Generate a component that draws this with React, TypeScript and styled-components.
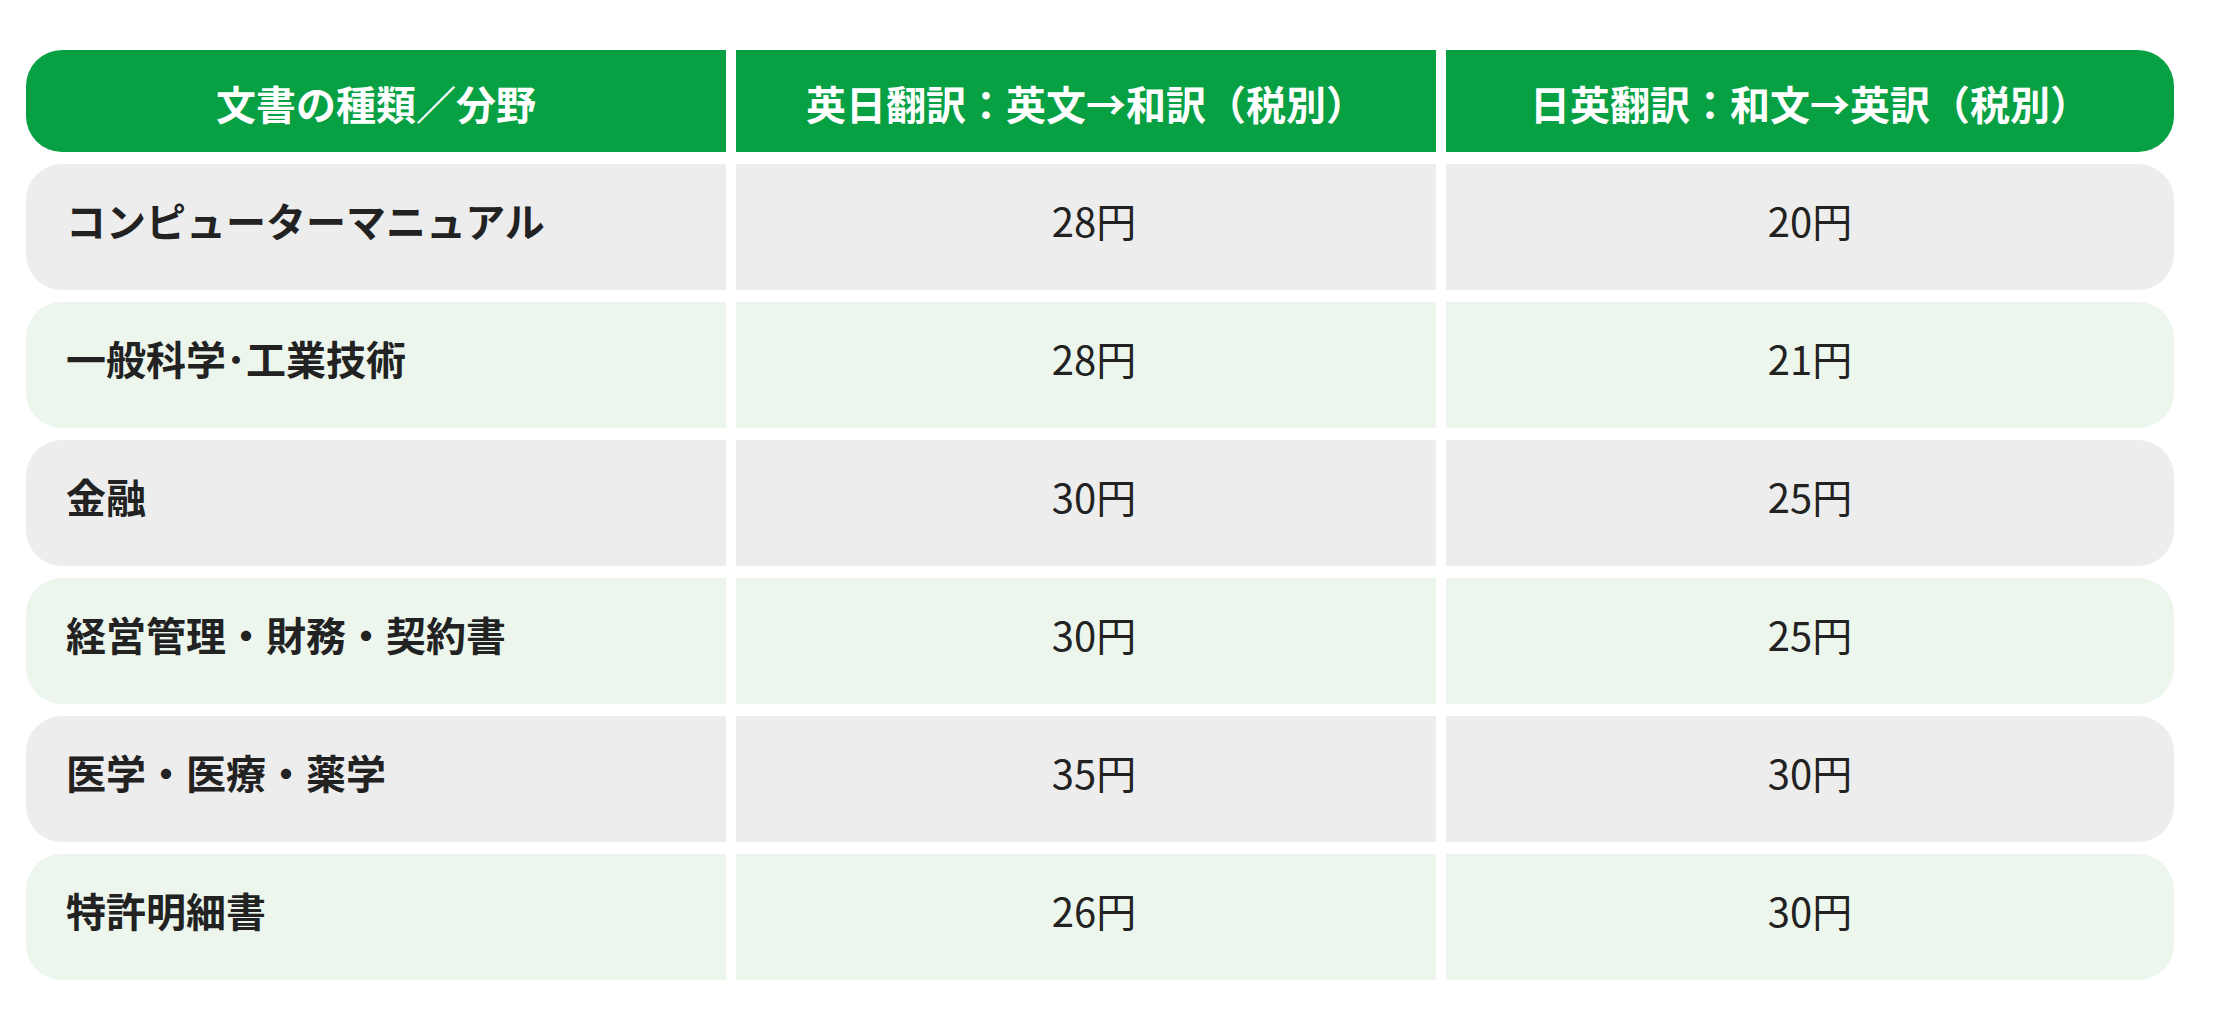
import React from 'react';
import styled, {createGlobalStyle} from 'styled-components';

const GlobalStyle = createGlobalStyle`
    * {
        box-sizing: border-box;
    }
    body {
        margin: 0;
        background: #ffffff;
        font-family: "Noto Sans CJK JP", "Noto Sans", sans-serif;
        color: #222222;
    }
`;

type RowData = {field: string, enJa: string, jaEn: string};

const rows: RowData[] = [
    {field: 'コンピューターマニュアル', enJa: '28円', jaEn: '20円'},
    {field: '一般科学･工業技術', enJa: '28円', jaEn: '21円'},
    {field: '金融', enJa: '30円', jaEn: '25円'},
    {field: '経営管理・財務・契約書', enJa: '30円', jaEn: '25円'},
    {field: '医学・医療・薬学', enJa: '35円', jaEn: '30円'},
    {field: '特許明細書', enJa: '26円', jaEn: '30円'},
];

const App: React.FunctionComponent = () => {
    return (
        <>
            <GlobalStyle/>
            <Page>
                <PriceTable>
                    <HeadCell>文書の種類／分野</HeadCell>
                    <HeadCell>英日翻訳：英文→和訳（税別）</HeadCell>
                    <HeadCell>日英翻訳：和文→英訳（税別）</HeadCell>
                    {rows.map((row, index) => (
                        <React.Fragment key={row.field}>
                            <FieldCell $tint={index % 2 === 1}>{row.field}</FieldCell>
                            <PriceCell $tint={index % 2 === 1} $shift={16}>{row.enJa}</PriceCell>
                            <PriceCell $tint={index % 2 === 1} $shift={0}>{row.jaEn}</PriceCell>
                        </React.Fragment>
                    ))}
                </PriceTable>
            </Page>
        </>
    );
}

const Page = styled.div`
    width: 2240px;
    min-height: 1026px;
    padding: 50px 66px 0 26px;
`;

const PriceTable = styled.div`
    display: grid;
    grid-template-columns: 700fr 700fr 728fr;
    grid-auto-rows: 126px;
    grid-template-rows: 102px;
    column-gap: 10px;
    row-gap: 12px;
    font-size: 40px;
    line-height: normal;

    & > :nth-child(3n + 1) {
        border-top-left-radius: 36px;
        border-bottom-left-radius: 36px;
    }
    & > :nth-child(3n) {
        border-top-right-radius: 36px;
        border-bottom-right-radius: 36px;
    }
`;

const HeadCell = styled.div`
    display: flex;
    align-items: center;
    justify-content: center;
    padding-top: 3px;
    background-color: #07a043;
    color: #ffffff;
    font-weight: 700;
    white-space: nowrap;
`;

const BodyCell = styled.div<{$tint: boolean}>`
    display: flex;
    align-items: center;
    padding-bottom: 14px;
    background-color: ${props => props.$tint ? '#ecf6ed' : '#ededed'};
    color: #222222;
    white-space: nowrap;
`;

const FieldCell = styled(BodyCell)`
    padding-left: 40px;
    font-weight: 700;
`;

const PriceCell = styled(BodyCell)<{$shift: number}>`
    justify-content: center;
    padding-left: ${props => props.$shift}px;
    font-weight: 400;
`;

export default App;
